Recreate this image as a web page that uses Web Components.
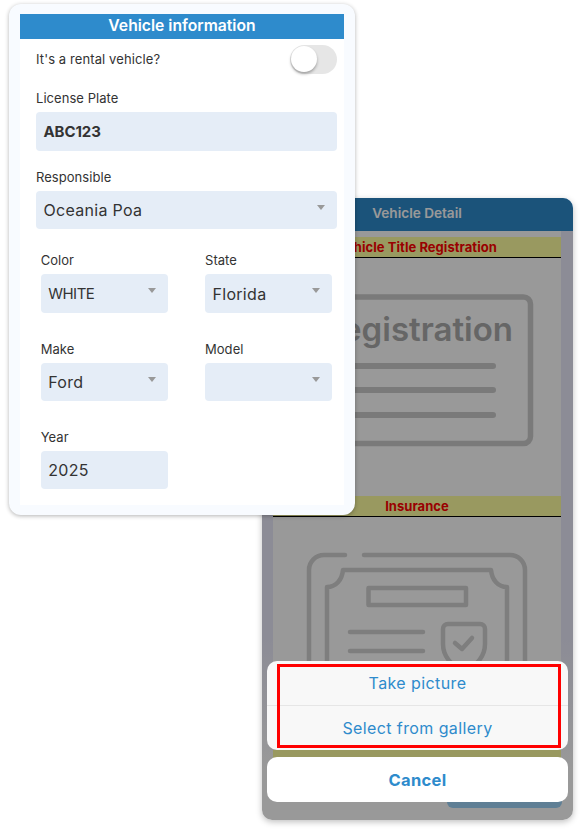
<!DOCTYPE html>
<html>
<head>
<meta charset="utf-8">
<title>Vehicle information</title>
<style>
  html, body { margin: 0; background: #fff; }
  body { font-family: "Inter", "Liberation Sans", sans-serif; }
</style>
</head>
<body>
<vehicle-page>
  <vehicle-detail slot="back"></vehicle-detail>
  <vehicle-form slot="front">
    <form-field label="License Plate" gap="15" strong>ABC123</form-field>
    <form-field label="Responsible" gap="17" dropdown>Oceania Poa</form-field>
    <div class="pairs">
      <form-field label="Color" dropdown><span style="font-size: 15px; letter-spacing: -.5px">WHITE</span></form-field>
      <form-field label="State" dropdown>Florida</form-field>
      <form-field label="Make" gap="27" dropdown>Ford</form-field>
      <form-field label="Model" gap="27" dropdown></form-field>
      <form-field label="Year" gap="26.7">2025</form-field>
    </div>
  </vehicle-form>
</vehicle-page>

<script>
// page canvas, the two screens are placed freely on it
class VehiclePage extends HTMLElement {
    constructor() {
        super();
        this.attachShadow({ mode: 'open' });
        this.shadowRoot.innerHTML = `
            <style>
                :host { display: block; position: relative; width: 582px; height: 835px; overflow: hidden; background: #fff; }
                ::slotted([slot="back"]) { position: absolute; left: 262px; top: 198px; }
                ::slotted([slot="front"]) { position: absolute; left: 9px; top: 4px; }
            </style>
            <slot name="back"></slot>
            <slot name="front"></slot>
        `;
    }
}

class FormField extends HTMLElement {
    constructor() {
        super();
        this.attachShadow({ mode: 'open' });
        this.shadowRoot.innerHTML = `
            <style>
                :host { display: block; }
                .label { height: 20px; line-height: 18px; font-size: 13px; color: #333; letter-spacing: .05px; }
                .box {
                    position: relative;
                    display: flex;
                    align-items: center;
                    box-sizing: border-box;
                    height: 38.5px;
                    margin-top: 3px;
                    padding: 0 7.5px;
                    background: #e5edf7;
                    border-radius: 4px;
                    font-size: 16px;
                    letter-spacing: .3px;
                    color: #333;
                }
                .box.strong { font-size: 15px; font-weight: 700; letter-spacing: -.1px; }
                .arrow { position: absolute; right: 12px; top: 14px; width: 0; height: 0; border: 4.5px solid transparent; border-top: 5px solid #999; border-bottom: 0; }
            </style>
            <div class="label"></div>
            <div class="box"><slot></slot></div>
        `;
    }

    connectedCallback() {
        this.shadowRoot.querySelector('.label').textContent = this.getAttribute('label');
        this.style.marginTop = (this.getAttribute('gap') || 0) + 'px';
        const box = this.shadowRoot.querySelector('.box');
        if (this.hasAttribute('strong')) box.classList.add('strong');
        if (this.hasAttribute('dropdown')) {
            const arrow = document.createElement('span');
            arrow.className = 'arrow';
            box.appendChild(arrow);
        }
    }
}

class ToggleSwitch extends HTMLElement {
    constructor() {
        super();
        this.attachShadow({ mode: 'open' });
        this.shadowRoot.innerHTML = `
            <style>
                :host { display: block; width: 47px; height: 29px; padding: 0; }
                .track { position: relative; width: 47px; height: 29px; border-radius: 15px; background: #e6e6e6; }
                .knob {
                    position: absolute; left: 1px; top: 1px; width: 26px; height: 26px; border-radius: 50%;
                    background: #fff; box-shadow: 0 2px 3px rgba(0, 0, 0, .3);
                }
            </style>
            <div class="track"><div class="knob"></div></div>
        `;
    }
}

class VehicleForm extends HTMLElement {
    constructor() {
        super();
        this.attachShadow({ mode: 'open' });
        this.shadowRoot.innerHTML = `
            <style>
                :host {
                    display: block;
                    box-sizing: border-box;
                    width: 346px;
                    height: 511px;
                    padding: 10px 11px;
                    background: #f8fbff;
                    border-radius: 12px;
                    box-shadow: 0 1px 4px rgba(0, 0, 0, .3);
                }
                .inner { height: 100%; background: #fff; }
                h2 {
                    margin: 0;
                    height: 25px;
                    line-height: 23px;
                    background: #2e8bcc;
                    color: #fff;
                    font-size: 15.7px;
                    font-weight: 600;
                    text-align: center;
                }
                .body { padding: 6px 7px 0 16px; }
                .rental { display: flex; justify-content: space-between; align-items: center; height: 29px; font-size: 13px; color: #333; letter-spacing: .1px; }
                .rental span { padding-bottom: 2px; }
                ::slotted(.pairs) {
                    display: grid;
                    grid-template-columns: 127.3px 127px;
                    column-gap: 37px;
                    margin: 22.3px 5px 0 4.7px;
                }
            </style>
            <div class="inner">
                <h2>Vehicle information</h2>
                <div class="body">
                    <div class="rental"><span>It's a rental vehicle?</span><toggle-switch></toggle-switch></div>
                    <slot></slot>
                </div>
            </div>
        `;
    }
}

class DocSection extends HTMLElement {
    constructor() {
        super();
        this.attachShadow({ mode: 'open' });
        this.shadowRoot.innerHTML = `
            <style>
                :host { display: block; }
                .band {
                    box-sizing: border-box;
                    height: 21px;
                    line-height: 20px;
                    background: #ffffa0;
                    border-bottom: 1px solid #000;
                    color: #ff0000;
                    font-size: 13px;
                    font-weight: 700;
                    letter-spacing: .05px;
                    text-align: center;
                }
                .pic { display: block; }
            </style>
            <div class="band"><slot name="title"></slot></div>
            <div class="pic"><slot></slot></div>
        `;
    }
}

class VehicleDetail extends HTMLElement {
    constructor() {
        super();
        this.attachShadow({ mode: 'open' });
        this.shadowRoot.innerHTML = `
            <style>
                :host {
                    display: block;
                    position: relative;
                    width: 311px;
                    height: 622px;
                    overflow: hidden;
                    border-radius: 10px;
                    background: linear-gradient(#e9e9fa 0, #e9e9fa 70%, #fff 92%);
                    box-shadow: 0 2px 6px rgba(0, 0, 0, .25);
                }
                header {
                    height: 33px;
                    line-height: 31px;
                    background: #2e8bcc;
                    color: #fff;
                    font-size: 13.6px;
                    font-weight: 600;
                    text-align: center;
                    padding-right: 1px;
                }
                .content {
                    width: 288px;
                    height: 589px;
                    box-sizing: border-box;
                    margin-left: 11px;
                    padding-top: 6px;
                    background: #fff;
                }
                svg { display: block; }
                .reg { font-family: "Inter", sans-serif; font-size: 33px; font-weight: 600; fill: #aaa; }
                .save { position: absolute; left: 184.5px; top: 590px; width: 115px; height: 20px; border-radius: 6px; background: #9ed4f8; }
                .dim { position: absolute; inset: 0; background: rgba(0, 0, 0, .4); }
                .sheet { position: absolute; left: 5px; top: 463px; width: 301px; }
                .group { position: relative; background: #f8f8f8; border-radius: 10px; overflow: hidden; }
                .item { height: 44px; line-height: 44px; box-sizing: border-box; text-align: center; color: #2e8bcc; font-size: 16px; letter-spacing: .4px; }
                .item + .item { height: 45px; border-top: 1px solid #e6e6e6; }
                .cancel { margin-top: 7px; height: 45px; line-height: 46px; text-align: center; color: #2e8bcc; font-size: 16.5px; font-weight: 700; letter-spacing: .3px; background: #fff; border-radius: 10px; }
                .mark { position: absolute; left: 10px; top: 3px; width: 284px; height: 84px; box-sizing: border-box; border: 3px solid #ff0000; }
            </style>
            <header>Vehicle Detail</header>
            <div class="content">
                <doc-section>
                    <span slot="title">Vehicle Title Registration</span>
                    <svg width="288" height="238" viewBox="0 0 288 238">
                        <rect x="30.5" y="39" width="227" height="146.5" rx="7" fill="none" stroke="#ccc" stroke-width="5.5"/>
                        <text class="reg" x="144" y="83" text-anchor="middle">Registration</text>
                        <g stroke="#ccc" stroke-width="6" stroke-linecap="round">
                            <path d="M60 108H220M60 132H220M60 157H220"/>
                        </g>
                    </svg>
                </doc-section>
                <doc-section>
                    <span slot="title">Insurance</span>
                    <svg width="288" height="233" viewBox="0 0 288 233" fill="none" stroke="#d2d2d2" stroke-width="4.5" stroke-linecap="round" stroke-linejoin="round">
                        <path d="M72 38H51a15 15 0 0 0-15 15V160"/>
                        <path d="M91 38H237a15 15 0 0 1 15 15V160"/>
                        <path d="M54 160V70c9 0 15-7 16-17H218c1 10 7 17 16 17V160"/>
                        <rect x="95.5" y="71" width="97.5" height="17"/>
                        <path d="M77 115H150M77 134H150"/>
                        <path d="M170 125V112a5 5 0 0 1 5-5H207a5 5 0 0 1 5 5V127c0 12-8 22-21 27-13-5-21-15-21-27V125"/>
                        <path d="M182 126l7 6 10-11"/>
                    </svg>
                </doc-section>
                <doc-section><span slot="title"></span></doc-section>
            </div>
            <div class="save"></div>
            <div class="dim"></div>
            <div class="sheet">
                <div class="group">
                    <div class="item">Take picture</div>
                    <div class="item">Select from gallery</div>
                    <div class="mark"></div>
                </div>
                <div class="cancel">Cancel</div>
            </div>
        `;
    }
}

customElements.define('vehicle-page', VehiclePage);
customElements.define('form-field', FormField);
customElements.define('toggle-switch', ToggleSwitch);
customElements.define('vehicle-form', VehicleForm);
customElements.define('doc-section', DocSection);
customElements.define('vehicle-detail', VehicleDetail);
</script>
</body>
</html>
